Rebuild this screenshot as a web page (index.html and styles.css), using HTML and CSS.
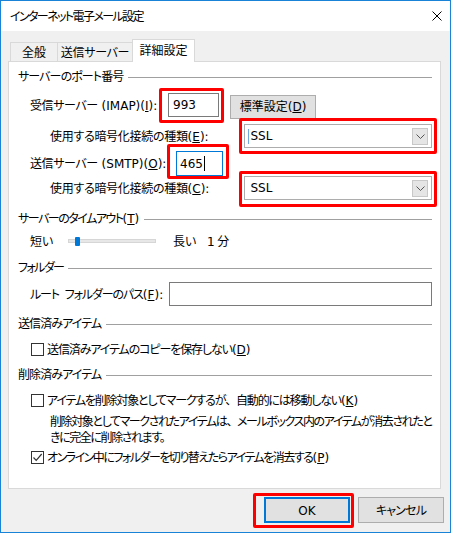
FILE: index.html
```html
<!DOCTYPE html>
<html lang="ja">
<head>
<meta charset="utf-8">
<title>インターネット電子メール設定</title>
<link rel="stylesheet" href="styles.css">
</head>
<body>
<div class="window">
  <div class="titlebar">
    <span class="title">インターネット電子メール設定</span>
    <svg class="close" width="10" height="10" viewBox="0 0 10 10"><path d="M0.5 0.5 L9.5 9.5 M9.5 0.5 L0.5 9.5" stroke="#000" stroke-width="1" fill="none"/></svg>
  </div>
  <div class="body">
    <div class="tabs">
      <div class="tab tab-general">全般</div>
      <div class="tab tab-send">送信サーバー</div>
      <div class="tab tab-adv active">詳細設定</div>
    </div>
    <div class="panel">
      <div class="group g-port"><span>サーバーのポート番号</span></div>
      <div class="row r-imap">
        <span class="label w-imap">受信サーバー<span class="lt"> (IMAP)(<u>I</u>):</span></span>
        <div class="textbox tb-imap">993</div>
        <button class="btn btn-std">標準設定<span class="lt">(<u>D</u>)</span></button>
      </div>
      <div class="row r-enc1">
        <span class="label w-enc">使用する暗号化接続の種類<span class="lt">(<u>E</u>):</span></span>
        <div class="select"><span class="caret-blue"></span><span class="sel-text">SSL</span><span class="arrow"><svg width="9" height="5" viewBox="0 0 9 5"><path d="M0.5 0.5 L4.5 4.5 L8.5 0.5" stroke="#555" fill="none"/></svg></span></div>
      </div>
      <div class="row r-smtp">
        <span class="label w-smtp">送信サーバー<span class="lt"> (SMTP)(<u>O</u>):</span></span>
        <div class="textbox tb-smtp focused">465<span class="caret"></span></div>
      </div>
      <div class="row r-enc2">
        <span class="label w-enc">使用する暗号化接続の種類<span class="lt">(<u>C</u>):</span></span>
        <div class="select"><span class="sel-text sel-pad">SSL</span><span class="arrow"><svg width="9" height="5" viewBox="0 0 9 5"><path d="M0.5 0.5 L4.5 4.5 L8.5 0.5" stroke="#555" fill="none"/></svg></span></div>
      </div>
      <div class="group g-timeout"><span>サーバーのタイムアウト<span class="lt">(<u>T</u>)</span></span></div>
      <div class="row r-slider">
        <span class="label w-short">短い</span>
        <div class="slider"><span class="thumb"></span></div>
        <span class="label w-long">長い</span>
        <span class="label"><span class="lt">1</span> 分</span>
      </div>
      <div class="group g-folder"><span>フォルダー</span></div>
      <div class="row r-root">
        <span class="label w-root">ルート フォルダーのパス<span class="lt">(<u>F</u>):</span></span>
        <div class="textbox tb-root"></div>
      </div>
      <div class="group g-sent"><span>送信済みアイテム</span></div>
      <div class="row r-cb1">
        <span class="checkbox"></span>
        <span class="label">送信済みアイテムのコピーを保存しない<span class="lt">(<u>D</u>)</span></span>
      </div>
      <div class="group g-deleted"><span>削除済みアイテム</span></div>
      <div class="row r-cb2">
        <span class="checkbox"></span>
        <span class="label">アイテムを削除対象としてマークするが<span class="fw">、</span>自動的には移動しない<span class="lt">(<u>K</u>)</span></span>
      </div>
      <div class="desc">
        <span class="desc-line">削除対象としてマークされたアイテムは<span class="fw">、</span>メールボックス内のアイテムが消去されたと</span>
        <span class="desc-line">きに完全に削除されます。</span>
      </div>
      <div class="row r-cb3">
        <span class="checkbox checked"><svg width="11" height="11" viewBox="0 0 11 11"><path d="M1.5 5.5 L4.2 8.3 L9.7 2" stroke="#333" stroke-width="1.2" fill="none"/></svg></span>
        <span class="label">オンライン中にフォルダーを切り替えたらアイテムを消去する<span class="lt">(<u>P</u>)</span></span>
      </div>
    </div>
    <div class="buttons">
      <button class="btn btn-dlg btn-default"><span class="lt">OK</span></button>
      <button class="btn btn-dlg btn-cancel">キャンセル</button>
    </div>
  </div>
  <div class="mark mark-imap"></div>
  <div class="mark mark-smtp"></div>
  <div class="mark mark-enc1"></div>
  <div class="mark mark-enc2"></div>
  <div class="mark mark-ok"></div>
</div>
</body>
</html>
```

FILE: styles.css
```css
* { box-sizing: border-box; }
html, body { margin: 0; padding: 0; background: #ffffff; }
body {
  font-family: "Noto Sans CJK JP", "Noto Sans", sans-serif;
  font-size: 12px;
  color: #000;
  font-feature-settings: "palt";
}
u { text-decoration: underline; text-underline-offset: 1px; }
.lt {
  font-family: "DejaVu Sans", "Noto Sans", sans-serif;
  font-size: 12px;
  letter-spacing: 0;
}
.fw { font-feature-settings: normal; }

.window {
  position: relative;
  width: 451px;
  height: 533px;
  border: 1px solid #1883d7;
  display: flex;
  flex-direction: column;
  background: #f0f0f0;
}
.titlebar {
  height: 30px;
  background: #ffffff;
  display: flex;
  align-items: center;
  justify-content: space-between;
  padding: 0 8px 0 9px;
  flex: none;
}
.title { font-size: 12px; line-height: 16px; letter-spacing: -1.6px; }
.close { display: block; }

.body {
  flex: 1;
  padding: 8px 6px 0 7px;
}
.tabs {
  display: flex;
  align-items: flex-end;
  height: 22px;
  padding-left: 2px;
  position: relative;
  z-index: 2;
}
.tab {
  height: 19px;
  border: 1px solid #d9d9d9;
  border-bottom: none;
  margin-right: -1px;
  background: #f0f0f0;
  display: flex;
  align-items: center;
  justify-content: center;
  line-height: 16px;
}
.tab-general { width: 48px; }
.tab-send { width: 76px; letter-spacing: -0.3px; }
.tab-adv { width: 63px; }
.tab.active {
  height: 23px;
  background: #ffffff;
  margin-bottom: -1px;
  padding-bottom: 2px;
}

.panel {
  width: 433px;
  height: 428px;
  background: #ffffff;
  border: 1px solid #d9d9d9;
  padding: 4px 8px 0 9px;
  position: relative;
  z-index: 1;
}

.group {
  height: 20px;
  display: flex;
  align-items: center;
  line-height: 16px;
  letter-spacing: -0.9px;
}
.group::after {
  content: "";
  flex: 1;
  height: 1px;
  background: #a0a0a0;
  margin-left: 5px;
  margin-top: 2px;
}
.row {
  display: flex;
  align-items: center;
  line-height: 16px;
}
.label { white-space: nowrap; }

.g-timeout { margin-top: 8px; letter-spacing: -1.5px; }
.g-folder { margin-top: 6px; letter-spacing: -1.6px; }
.g-sent { margin-top: 7px; }
.g-deleted { margin-top: 5px; }

.r-imap { height: 24px; margin-top: 7px; padding-left: 12px; }
.r-enc1 { height: 24px; margin-top: 7px; padding-left: 32px; }
.r-smtp { height: 25px; margin-top: 3px; padding-left: 12px; }
.r-enc2 { height: 24px; margin-top: 0; padding-left: 32px; }
.r-slider { height: 20px; margin-top: 3px; padding-left: 12px; }
.r-root { height: 24px; margin-top: 5px; padding-left: 12px; }
.r-cb1 { height: 20px; margin-top: 6px; padding-left: 13px; letter-spacing: -1.1px; }
.r-cb2 { height: 20px; margin-top: 6px; padding-left: 13px; letter-spacing: -1.2px; }
.r-cb3 { height: 20px; margin-top: 2px; padding-left: 13px; letter-spacing: -1.5px; }

.w-imap { width: 138px; letter-spacing: -0.4px; }
.w-smtp { width: 146px; letter-spacing: -0.4px; }
.w-enc { width: 195px; letter-spacing: -0.3px; }
.w-root { width: 139px; letter-spacing: -1.1px; word-spacing: 4px; }
.w-short { width: 38px; }
.w-long { width: 34px; margin-left: 17px; }

.textbox {
  height: 100%;
  border: 1px solid #7a7a7a;
  background: #fff;
  display: flex;
  align-items: center;
  padding-left: 4px;
  font-family: "DejaVu Sans", "Noto Sans", sans-serif;
  font-size: 12px;
}
.textbox.focused { border-color: #0078d7; }
.tb-imap { width: 51px; }
.tb-smtp { width: 47px; padding-left: 3px; }
.tb-root { width: 263px; }
.caret {
  display: inline-block;
  width: 1px;
  height: 15px;
  background: #000;
  margin-left: 1px;
}

.btn {
  font-family: "Noto Sans CJK JP", "Noto Sans", sans-serif;
  font-size: 12px;
  font-feature-settings: "palt";
  background: #e1e1e1;
  border: 1px solid #adadad;
  color: #000;
  padding: 0;
  line-height: 16px;
}
.btn-std { width: 86px; height: 24px; margin-left: 11px; margin-top: 3px; }

.select {
  width: 188px;
  height: 24px;
  border: 1px solid #adadad;
  background: #fff;
  display: flex;
  align-items: center;
  padding: 0 3px 0 3px;
  position: relative;
}
.sel-text {
  flex: 1;
  font-family: "DejaVu Sans", "Noto Sans", sans-serif;
  font-size: 12px;
}
.sel-pad { padding-left: 2px; }
.caret-blue {
  width: 1px;
  height: 15px;
  background: #6fa8dc;
  margin-right: 1px;
}
.arrow {
  width: 16px;
  height: 17px;
  background: #e5e5e5;
  border: 1px solid #c8c8c8;
  display: flex;
  align-items: center;
  justify-content: center;
}
.arrow svg { display: block; }

.slider {
  width: 88px;
  height: 4px;
  background: #e7e7e7;
  border: 1px solid #d6d6d6;
  position: relative;
}
.thumb {
  position: absolute;
  left: 6px;
  top: -3px;
  width: 5px;
  height: 9px;
  background: #0078d7;
  border-radius: 1px;
}

.checkbox {
  width: 13px;
  height: 13px;
  border: 1px solid #333;
  background: #fff;
  margin-right: 3px;
  display: flex;
  align-items: center;
  justify-content: center;
  flex: none;
}
.checkbox svg { display: block; }

.desc {
  margin: 3px 0 0 32px;
  width: 389px;
  letter-spacing: -1.4px;
  display: flex;
  flex-direction: column;
}
.desc-line {
  display: block;
  height: 16px;
  line-height: 16px;
  white-space: nowrap;
}

.buttons {
  display: flex;
  justify-content: flex-end;
  gap: 8px;
  margin-top: 8px;
  padding-right: 0;
}
.btn-dlg { width: 86px; height: 26px; }
.btn-cancel { letter-spacing: -0.8px; }
.btn-default { border: 2px solid #0078d7; }

.mark {
  position: absolute;
  border: 3px solid #ff0000;
  border-radius: 2px;
  z-index: 5;
}
.mark-imap { left: 158px; top: 87px; width: 65px; height: 35px; }
.mark-smtp { left: 166px; top: 143px; width: 62px; height: 35px; }
.mark-enc1 { left: 238px; top: 117px; width: 198px; height: 36px; }
.mark-enc2 { left: 238px; top: 170px; width: 198px; height: 36px; }
.mark-ok { left: 252px; top: 492px; width: 101px; height: 35px; }
```
